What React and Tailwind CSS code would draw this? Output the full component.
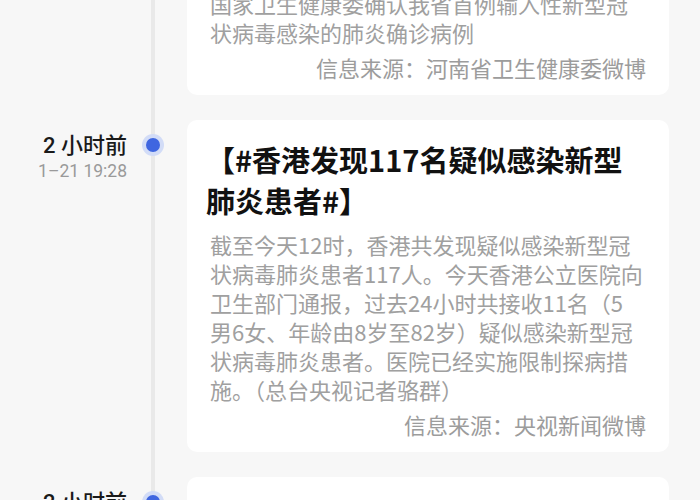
const items = [
  {
    ago: "3 小时前",
    date: "1-21 18:40",
    title: null,
    lines: ["国家卫生健康委确认我省首例输入性新型冠", "状病毒感染的肺炎确诊病例"],
    source: "信息来源：河南省卫生健康委微博",
    hideTime: true,
  },
  {
    ago: "2 小时前",
    date: "1–21 19:28",
    title: ["【#香港发现117名疑似感染新型", "肺炎患者#】"],
    lines: [
      "截至今天12时，香港共发现疑似感染新型冠",
      "状病毒肺炎患者117人。今天香港公立医院向",
      "卫生部门通报，过去24小时共接收11名（5",
      "男6女、年龄由8岁至82岁）疑似感染新型冠",
      "状病毒肺炎患者。医院已经实施限制探病措",
      "施。（总台央视记者骆群）",
    ],
    source: "信息来源：央视新闻微博",
  },
  {
    ago: "2 小时前",
    date: "1–21 19:10",
    title: ["【#河南新增确诊病例#】"],
    lines: [],
    source: "",
  },
];

function Row({ item }) {
  return (
    <div className="flex items-stretch">
      <div
        className="w-[127px] shrink-0 text-right pt-[12px]"
        style={{ fontFamily: 'Roboto, "Noto Sans CJK SC", sans-serif' }}
      >
        {!item.hideTime && (
          <>
            <div className="text-[22px] leading-[28px] font-medium text-[#1a1a1a]">{item.ago}</div>
            <div className="text-[17.5px] leading-[22px] text-[#9a9a9a]">{item.date}</div>
          </>
        )}
      </div>
      <div className="relative w-[60px] shrink-0 flex">
        <div className="ml-[24px] w-[4px] bg-[#e9e9e9]" />
        {!item.hideTime && (
          <div className="absolute top-[14px] left-[15px] w-[22px] h-[22px] rounded-full bg-[#d2dcf7] flex items-center justify-center">
            <div className="w-[14px] h-[14px] rounded-full bg-[#3f66e0]" />
          </div>
        )}
      </div>
      <div className="flex-1 pr-[31px] pb-[25px]">
        <div className="bg-white rounded-[10px] px-[23px] pt-[19px] pb-[13px]">
          {item.title && (
            <div className="text-[29px] leading-[41px] font-bold text-[#111] mb-[9px] -ml-[4px]">
              {item.title.map((t, i) => (
                <div key={i} className="whitespace-nowrap">{t}</div>
              ))}
            </div>
          )}
          <div className="text-[22px] leading-[29px] text-[#a0a0a0]">
            {item.lines.map((t, i) => (
              <div key={i} className="whitespace-nowrap">{t}</div>
            ))}
          </div>
          {item.source && (
            <div className="text-right text-[22px] leading-[29px] text-[#9c9c9c] mt-[6px]">{item.source}</div>
          )}
        </div>
      </div>
    </div>
  );
}

export default function App() {
  return (
    <div
      className="w-[700px] h-[500px] overflow-hidden bg-[#f7f7f7]"
      style={{ fontFamily: '"Noto Sans CJK SC", "Noto Sans", sans-serif' }}
    >
      <div className="-mt-[30px]">
        {items.map((it, i) => (
          <Row key={i} item={it} />
        ))}
      </div>
    </div>
  );
}
